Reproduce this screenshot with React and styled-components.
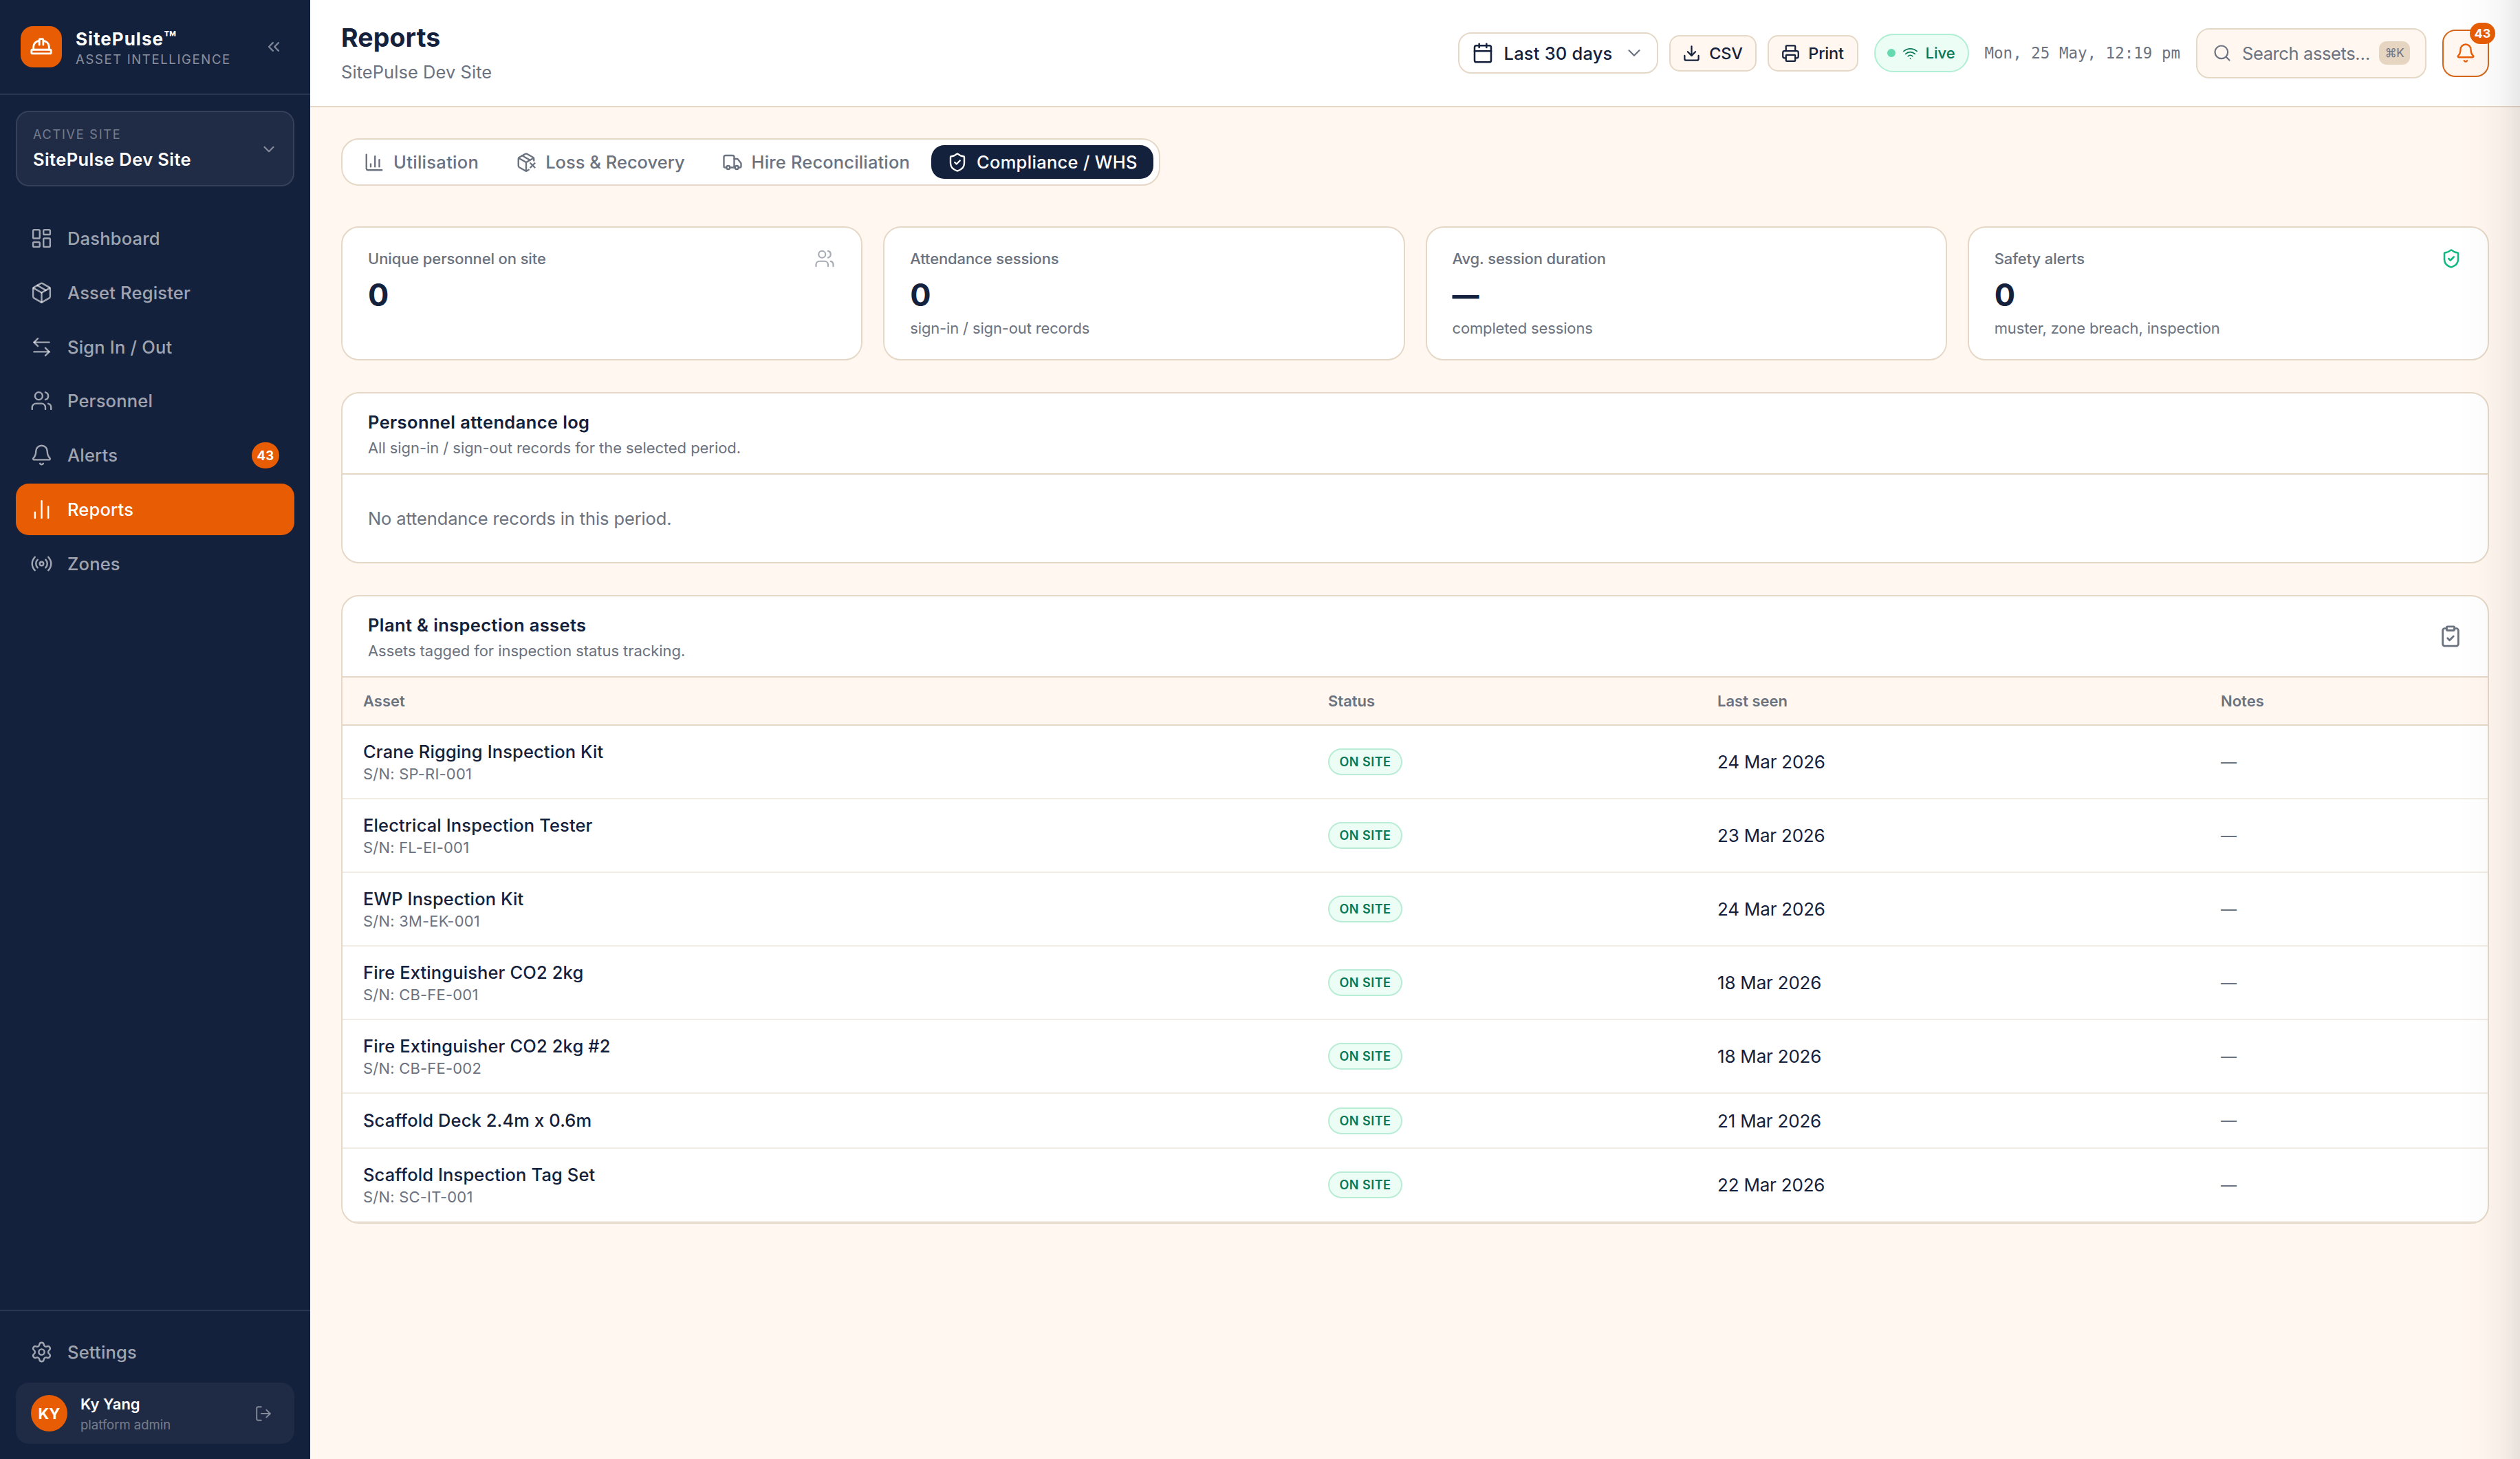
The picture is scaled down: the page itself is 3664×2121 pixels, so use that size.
import styled, { createGlobalStyle } from "styled-components";
import {
  ArrowLeftRight,
  Bell,
  Calendar,
  ChartColumn,
  ChartNoAxesColumn,
  ChevronDown,
  ChevronsLeft,
  ClipboardCheck,
  Download,
  HardHat,
  LayoutDashboard,
  LogOut,
  Package,
  PackageX,
  Printer,
  Radio,
  Search,
  Settings,
  ShieldCheck,
  Truck,
  Users,
  Wifi,
} from "lucide-react";

const navy = "#14213d";
const orange = "#e85d04";
const cream = "#fff7f0";
const sand = "#e6d8c7";
const grey = "#6b7280";

const GlobalStyle = createGlobalStyle`
  *, *::before, *::after {
    box-sizing: border-box;
  }

  body {
    margin: 0;
    background: ${cream};
    color: ${navy};
    font-family: Inter, "Liberation Sans", sans-serif;
    font-size: 26px;
    -webkit-font-smoothing: antialiased;
  }

  h1, h2, p {
    margin: 0;
  }

  svg {
    flex-shrink: 0;
  }
`;

const Layout = styled.div`
  display: flex;
  width: 100%;
  height: 2121px;
  overflow: hidden;
`;

const EdgeShade = styled.div`
  position: fixed;
  top: 0;
  right: 0;
  bottom: 0;
  width: 90px;
  pointer-events: none;
  background: linear-gradient(
    to right,
    rgba(0, 0, 0, 0) 0%,
    rgba(0, 0, 0, 0.012) 40%,
    rgba(0, 0, 0, 0.035) 70%,
    rgba(0, 0, 0, 0.09) 100%
  );
`;

/* ---------- sidebar ---------- */

const Sidebar = styled.aside`
  display: flex;
  flex-direction: column;
  flex-shrink: 0;
  width: 451px;
  background: ${navy};
  color: #fff;
`;

const Brand = styled.div`
  display: flex;
  align-items: center;
  height: 138px;
  padding: 0 39px 0 30px;
  border-bottom: 2px solid rgba(255, 255, 255, 0.1);
`;

const Logo = styled.div`
  display: flex;
  align-items: center;
  justify-content: center;
  width: 60px;
  height: 60px;
  border-radius: 18px;
  background: ${orange};
`;

const BrandText = styled.div`
  flex: 1;
  padding: 2px 0 0 20px;
  white-space: nowrap;
`;

const BrandName = styled.p`
  font-size: 26px;
  font-weight: 700;
  line-height: 33px;
  letter-spacing: 1px;

  span {
    display: inline-block;
    font-size: 29px;
    line-height: 1;
  }
`;

const BrandTag = styled.p`
  font-size: 18.5px;
  line-height: 26px;
  letter-spacing: 1.65px;
  color: rgba(255, 255, 255, 0.5);
`;

const SiteCard = styled.div`
  display: flex;
  align-items: center;
  justify-content: space-between;
  height: 110px;
  margin: 23px 23px 38px;
  padding: 2px 22px 0 23px;
  border: 2px solid rgba(255, 255, 255, 0.1);
  border-radius: 19px;
  background: #202b46;
`;

const SiteCaption = styled.p`
  font-size: 18px;
  line-height: 30px;
  letter-spacing: 1.8px;
  color: rgba(255, 255, 255, 0.4);
`;

const SiteName = styled.p`
  font-size: 25.5px;
  font-weight: 600;
  line-height: 42px;
  letter-spacing: 0.4px;
`;

const Nav = styled.nav`
  display: flex;
  flex: 1;
  flex-direction: column;
  gap: 3.8px;
  padding: 0 23px;
`;

const NavItem = styled.a`
  display: flex;
  align-items: center;
  height: 75px;
  padding: 0 22px 0 21px;
  border-radius: 19px;
  font-size: 25.5px;
  font-weight: 500;
  letter-spacing: 0.2px;
  background: ${(props) => (props.$active ? orange : "transparent")};
  color: ${(props) => (props.$active ? "#fff" : "rgba(255, 255, 255, 0.6)")};

  svg {
    margin-right: 21px;
  }
`;

const NavCount = styled.span`
  display: flex;
  align-items: center;
  justify-content: center;
  height: 38px;
  min-width: 40px;
  margin-left: auto;
  border-radius: 19px;
  background: ${orange};
  color: #fff;
  font-size: 18.5px;
  font-weight: 700;
`;

const SidebarFooter = styled.div`
  display: flex;
  flex-direction: column;
  gap: 7px;
  padding: 22px 23px;
  border-top: 2px solid rgba(255, 255, 255, 0.1);
`;

const UserCard = styled.div`
  display: flex;
  align-items: center;
  height: 89px;
  padding: 0 32px 0 22px;
  border-radius: 19px;
  background: #1f2b45;
`;

const Avatar = styled.div`
  display: flex;
  align-items: center;
  justify-content: center;
  width: 53px;
  height: 53px;
  border-radius: 50%;
  background: ${orange};
  font-size: 22px;
  font-weight: 700;
`;

const UserText = styled.div`
  flex: 1;
  padding-left: 19px;
`;

const UserName = styled.p`
  font-size: 22px;
  font-weight: 600;
  line-height: 32px;
`;

const UserRole = styled.p`
  font-size: 18.5px;
  line-height: 28px;
  color: rgba(255, 255, 255, 0.4);
`;

/* ---------- top bar ---------- */

const Content = styled.div`
  flex: 1;
  min-width: 0;
`;

const TopBar = styled.header`
  display: flex;
  align-items: center;
  justify-content: space-between;
  height: 156px;
  padding: 0 45px;
  border-bottom: 2px solid ${sand};
  background: #fff;
`;

const Title = styled.h1`
  font-size: 37.5px;
  font-weight: 700;
  line-height: 52px;
  letter-spacing: 0.1px;
`;

const Subtitle = styled.p`
  margin-top: 4px;
  font-size: 25.5px;
  line-height: 40px;
  letter-spacing: 0.05px;
  color: ${grey};
`;

const Tools = styled.div`
  display: flex;
  align-items: center;
  gap: 23px;
`;

const ToolGroup = styled.div`
  display: flex;
  align-items: center;
  gap: 16px;
`;

const RangeSelect = styled.button`
  display: flex;
  align-items: center;
  width: 291px;
  height: 60px;
  padding: 0 18px 0 18px;
  border: 2px solid ${sand};
  border-radius: 19px;
  background: #fff;
  color: ${navy};
  font: inherit;
  font-size: 25.5px;
  font-weight: 500;
  letter-spacing: 0.2px;
  white-space: nowrap;

  span {
    flex: 1;
    padding-left: 15px;
    text-align: left;
  }
`;

const SmallButton = styled.button`
  display: flex;
  align-items: center;
  justify-content: center;
  gap: 12px;
  width: ${(props) => props.$width}px;
  height: 53px;
  padding: 0;
  border: 2px solid ${sand};
  border-radius: 15px;
  background: ${cream};
  color: ${navy};
  font: inherit;
  font-size: 23.5px;
  font-weight: 500;
  letter-spacing: -0.2px;
`;

const LivePill = styled.div`
  display: flex;
  align-items: center;
  justify-content: center;
  width: 138px;
  height: 56px;
  border: 2px solid #b0efd3;
  border-radius: 28px;
  background: #ecfdf5;
  color: #047857;
  font-size: 22px;
  font-weight: 500;

  svg {
    margin: 0 10px;
  }
`;

const LiveDot = styled.i`
  width: 12px;
  height: 12px;
  border-radius: 50%;
  background: #65d9b0;
`;

const Clock = styled.time`
  color: ${grey};
  font-family: "DejaVu Sans Mono", monospace;
  font-size: 22.5px;
  white-space: nowrap;
`;

const SearchBox = styled.div`
  display: flex;
  align-items: center;
  width: 335px;
  height: 73px;
  padding: 0 22px;
  border: 2px solid ${sand};
  border-radius: 19px;
  background: ${cream};
  color: ${grey};
  font-size: 25.5px;
  letter-spacing: -0.4px;
  white-space: nowrap;

  span {
    flex: 1;
    padding-left: 15px;
  }
`;

const Kbd = styled.kbd`
  display: flex;
  align-items: center;
  justify-content: center;
  width: 45px;
  height: 34px;
  border-radius: 11px;
  background: #e6d5c0;
  font-family: Inter, "DejaVu Sans", sans-serif;
  font-size: 17px;
  letter-spacing: -0.5px;
`;

const BellButton = styled.button`
  position: relative;
  display: flex;
  align-items: center;
  justify-content: center;
  width: 68px;
  height: 69px;
  padding: 0;
  border: 2px solid #d4661c;
  border-radius: 19px;
  background: ${cream};
  color: ${orange};
`;

const BellCount = styled.span`
  position: absolute;
  top: -12px;
  right: -11px;
  display: flex;
  align-items: center;
  justify-content: center;
  width: 37px;
  height: 31px;
  border-radius: 16px;
  background: ${orange};
  color: #fff;
  font: 700 18px Inter, sans-serif;
`;

/* ---------- page ---------- */

const Page = styled.main`
  display: flex;
  flex-direction: column;
  gap: 46px;
  padding: 45px 45px 0;
`;

const Tabs = styled.div`
  display: flex;
  align-self: flex-start;
  gap: 8px;
  height: 69px;
  margin-bottom: 13px;
  padding: 8px;
  border: 2px solid ${sand};
  border-radius: 26px;
  background: #fff;
`;

const Tab = styled.button`
  display: flex;
  align-items: center;
  gap: 13px;
  padding: 0 23px;
  border: 0;
  border-radius: 19px;
  background: ${(props) => (props.$active ? navy : "transparent")};
  color: ${(props) => (props.$active ? "#fff" : grey)};
  font: inherit;
  font-size: 25.5px;
  font-weight: 500;
  letter-spacing: ${(props) => props.$tracking}px;
  white-space: nowrap;
`;

const Stats = styled.section`
  display: grid;
  grid-template-columns: repeat(4, 1fr);
  gap: 30px;
`;

const StatCard = styled.article`
  height: 195px;
  padding: 30px 38px 30px 37px;
  border: 2px solid ${sand};
  border-radius: 26px;
  background: #fff;
`;

const StatLabel = styled.div`
  display: flex;
  justify-content: space-between;
  font-size: 22px;
  font-weight: 500;
  line-height: 30px;
  letter-spacing: -0.12px;
  color: ${grey};
`;

const StatValue = styled.p`
  margin-top: 14px;
  font-size: ${(props) => (props.$blank ? 39 : 45)}px;
  font-weight: ${(props) => (props.$blank ? 800 : 700)};
  line-height: 48px;
`;

const StatNote = styled.p`
  margin-top: 9px;
  font-size: 22px;
  line-height: 30px;
  letter-spacing: -0.15px;
  color: ${grey};
`;

const Panel = styled.section`
  overflow: hidden;
  border: 2px solid ${sand};
  border-radius: 26px;
  background: #fff;
`;

const PanelHead = styled.div`
  display: flex;
  align-items: center;
  justify-content: space-between;
  height: 118px;
  padding: 0 37px;
  border-bottom: 2px solid ${sand};
  color: ${grey};
`;

const PanelTitle = styled.h2`
  color: ${navy};
  font-size: 25.5px;
  font-weight: 600;
  line-height: 38px;
  letter-spacing: 0.38px;
`;

const PanelSub = styled.p`
  margin-top: 3px;
  font-size: 22px;
  line-height: 30px;
  letter-spacing: -0.06px;
`;

const Empty = styled.p`
  padding: 0 37px;
  font-size: 25.5px;
  line-height: 127px;
  letter-spacing: -0.13px;
  color: ${grey};
`;

const Table = styled.table`
  width: 100%;
  table-layout: fixed;
  border-collapse: separate;
  border-spacing: 0;
`;

const HeadCell = styled.th`
  width: ${(props) => props.$width};
  height: 70px;
  padding: 0 30px;
  border-bottom: 2px solid ${sand};
  background: ${cream};
  color: ${grey};
  font-size: 22px;
  font-weight: 600;
  text-align: left;
`;

const Row = styled.tr`
  height: ${(props) => (props.$short ? 80 : 107)}px;
`;

const Cell = styled.td`
  padding: 0 30px;
  border-bottom: 2px solid #f1ece6;
  color: ${(props) => (props.$muted ? grey : navy)};
  font-size: ${(props) => (props.$muted ? 23 : 26)}px;
  letter-spacing: -0.2px;
`;

const AssetName = styled.p`
  font-size: 25.5px;
  font-weight: 500;
  line-height: 36px;
  letter-spacing: 0.12px;
`;

const Serial = styled.p`
  font-size: 22px;
  line-height: 29px;
  letter-spacing: 0.2px;
  color: ${grey};
`;

const StatusBadge = styled.span`
  display: inline-flex;
  align-items: center;
  justify-content: center;
  width: 108px;
  height: 39px;
  border: 2px solid #b9ecd5;
  border-radius: 20px;
  background: #ecfdf5;
  color: #047857;
  font-size: 18px;
  font-weight: 600;
  letter-spacing: 0.5px;
  vertical-align: middle;
`;

const navItems = [
  { label: "Dashboard", icon: LayoutDashboard },
  { label: "Asset Register", icon: Package },
  { label: "Sign In / Out", icon: ArrowLeftRight },
  { label: "Personnel", icon: Users },
  { label: "Alerts", icon: Bell, count: 43 },
  { label: "Reports", icon: ChartNoAxesColumn, active: true },
  { label: "Zones", icon: Radio },
];

const tabs = [
  { label: "Utilisation", icon: ChartColumn, tracking: 0.3 },
  { label: "Loss & Recovery", icon: PackageX, tracking: 0 },
  { label: "Hire Reconciliation", icon: Truck, tracking: 0.15 },
  { label: "Compliance / WHS", icon: ShieldCheck, tracking: 0.3, active: true },
];

const stats = [
  { label: "Unique personnel on site", value: "0", icon: <Users size={30} strokeWidth={1.75} color="#a6abb5" /> },
  { label: "Attendance sessions", value: "0", note: "sign-in / sign-out records" },
  { label: "Avg. session duration", value: "—", note: "completed sessions" },
  {
    label: "Safety alerts",
    value: "0",
    note: "muster, zone breach, inspection",
    icon: <ShieldCheck size={30} strokeWidth={2} color="#10b981" />,
  },
];

const assets = [
  { name: "Crane Rigging Inspection Kit", serial: "SP-RI-001", seen: "24 Mar 2026" },
  { name: "Electrical Inspection Tester", serial: "FL-EI-001", seen: "23 Mar 2026" },
  { name: "EWP Inspection Kit", serial: "3M-EK-001", seen: "24 Mar 2026" },
  { name: "Fire Extinguisher CO2 2kg", serial: "CB-FE-001", seen: "18 Mar 2026" },
  { name: "Fire Extinguisher CO2 2kg #2", serial: "CB-FE-002", seen: "18 Mar 2026" },
  { name: "Scaffold Deck 2.4m x 0.6m", seen: "21 Mar 2026" },
  { name: "Scaffold Inspection Tag Set", serial: "SC-IT-001", seen: "22 Mar 2026" },
];

const SideMenu = () => (
  <Sidebar>
    <Brand>
      <Logo>
        <HardHat size={34} strokeWidth={2} />
      </Logo>
      <BrandText>
        <BrandName>
          SitePulse<span>™</span>
        </BrandName>
        <BrandTag>ASSET INTELLIGENCE</BrandTag>
      </BrandText>
      <ChevronsLeft size={28} strokeWidth={2} color="#7d8597" />
    </Brand>

    <SiteCard>
      <div>
        <SiteCaption>ACTIVE SITE</SiteCaption>
        <SiteName>SitePulse Dev Site</SiteName>
      </div>
      <ChevronDown size={26} strokeWidth={2} color="#858b9b" />
    </SiteCard>

    <Nav>
      {navItems.map(({ label, icon: Icon, active, count }) => (
        <NavItem key={label} $active={active}>
          <Icon size={33} strokeWidth={1.75} />
          {label}
          {count && <NavCount>{count}</NavCount>}
        </NavItem>
      ))}
    </Nav>

    <SidebarFooter>
      <NavItem>
        <Settings size={33} strokeWidth={1.75} />
        Settings
      </NavItem>
      <UserCard>
        <Avatar>KY</Avatar>
        <UserText>
          <UserName>Ky Yang</UserName>
          <UserRole>platform admin</UserRole>
        </UserText>
        <LogOut size={26} strokeWidth={1.75} color="#858b9b" />
      </UserCard>
    </SidebarFooter>
  </Sidebar>
);

const Header = () => (
  <TopBar>
    <div>
      <Title>Reports</Title>
      <Subtitle>SitePulse Dev Site</Subtitle>
    </div>
    <Tools>
      <ToolGroup>
        <RangeSelect>
          <Calendar size={32} strokeWidth={1.9} />
          <span>Last 30 days</span>
          <ChevronDown size={30} strokeWidth={1.75} color={grey} />
        </RangeSelect>
        <SmallButton $width={127}>
          <Download size={27} strokeWidth={2} />
          CSV
        </SmallButton>
        <SmallButton $width={132}>
          <Printer size={27} strokeWidth={2} />
          Print
        </SmallButton>
      </ToolGroup>
      <LivePill>
        <LiveDot />
        <Wifi size={23} strokeWidth={1.75} />
        Live
      </LivePill>
      <Clock>Mon, 25 May, 12:19 pm</Clock>
      <SearchBox>
        <Search size={28} strokeWidth={1.9} />
        <span>Search assets…</span>
        <Kbd>⌘K</Kbd>
      </SearchBox>
      <BellButton>
        <Bell size={30} strokeWidth={1.9} />
        <BellCount>43</BellCount>
      </BellButton>
    </Tools>
  </TopBar>
);

const App = () => (
  <>
    <GlobalStyle />
    <Layout>
      <SideMenu />

      <Content>
        <Header />

        <Page>
          <Tabs>
            {tabs.map(({ label, icon: Icon, tracking, active }) => (
              <Tab key={label} $active={active} $tracking={tracking}>
                <Icon size={30} strokeWidth={1.9} />
                {label}
              </Tab>
            ))}
          </Tabs>

          <Stats>
            {stats.map(({ label, value, note, icon }) => (
              <StatCard key={label}>
                <StatLabel>
                  {label}
                  {icon}
                </StatLabel>
                <StatValue $blank={value === "—"}>{value}</StatValue>
                {note && <StatNote>{note}</StatNote>}
              </StatCard>
            ))}
          </Stats>

          <Panel>
            <PanelHead>
              <div>
                <PanelTitle>Personnel attendance log</PanelTitle>
                <PanelSub>All sign-in / sign-out records for the selected period.</PanelSub>
              </div>
            </PanelHead>
            <Empty>No attendance records in this period.</Empty>
          </Panel>

          <Panel>
            <PanelHead>
              <div>
                <PanelTitle>Plant &amp; inspection assets</PanelTitle>
                <PanelSub>Assets tagged for inspection status tracking.</PanelSub>
              </div>
              <ClipboardCheck size={34} strokeWidth={2} />
            </PanelHead>
            <Table>
              <thead>
                <tr>
                  <HeadCell $width="1403px">Asset</HeadCell>
                  <HeadCell $width="566px">Status</HeadCell>
                  <HeadCell $width="732px">Last seen</HeadCell>
                  <HeadCell>Notes</HeadCell>
                </tr>
              </thead>
              <tbody>
                {assets.map(({ name, serial, seen }) => (
                  <Row key={name} $short={!serial}>
                    <Cell>
                      <AssetName>{name}</AssetName>
                      {serial && <Serial>S/N: {serial}</Serial>}
                    </Cell>
                    <Cell>
                      <StatusBadge>ON SITE</StatusBadge>
                    </Cell>
                    <Cell>{seen}</Cell>
                    <Cell $muted>—</Cell>
                  </Row>
                ))}
              </tbody>
            </Table>
          </Panel>
        </Page>
      </Content>
    </Layout>
    <EdgeShade />
  </>
);

export default App;
